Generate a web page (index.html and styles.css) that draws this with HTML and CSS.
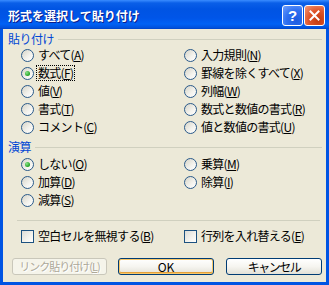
FILE: index.html
```html
<!DOCTYPE html>
<html lang="ja">
<head>
<meta charset="utf-8">
<link rel="stylesheet" href="styles.css">
</head>
<body>
<div class="window">
  <div class="titlebar">
    <span class="title">形式を選択して貼り付け</span>
    <div class="tb-buttons">
      <span class="tb-btn help">?</span>
      <span class="tb-btn close"><svg width="11" height="11" viewBox="0 0 11 11"><path d="M1.5 1.5 L9.5 9.5 M9.5 1.5 L1.5 9.5" stroke="#fff" stroke-width="2" stroke-linecap="square"/></svg></span>
    </div>
  </div>
  <div class="client">
    <div class="group-head"><span class="glabel">貼り付け</span><span class="rule"></span></div>
    <div class="options paste">
      <label class="opt"><span class="radio"></span><span class="txt">すべて(<u>A</u>)</span></label>
      <label class="opt"><span class="radio on"></span><span class="txt focus">数式(<u>F</u>)</span></label>
      <label class="opt"><span class="radio"></span><span class="txt">値(<u>V</u>)</span></label>
      <label class="opt"><span class="radio"></span><span class="txt">書式(<u>T</u>)</span></label>
      <label class="opt"><span class="radio"></span><span class="txt">コメント(<u>C</u>)</span></label>
      <label class="opt"><span class="radio"></span><span class="txt">入力規則(<u>N</u>)</span></label>
      <label class="opt"><span class="radio"></span><span class="txt">罫線を除くすべて(<u>X</u>)</span></label>
      <label class="opt"><span class="radio"></span><span class="txt">列幅(<u>W</u>)</span></label>
      <label class="opt"><span class="radio"></span><span class="txt">数式と数値の書式(<u>R</u>)</span></label>
      <label class="opt"><span class="radio"></span><span class="txt">値と数値の書式(<u>U</u>)</span></label>
    </div>
    <div class="group-head op-head"><span class="glabel">演算</span><span class="rule"></span></div>
    <div class="options ops">
      <label class="opt"><span class="radio on"></span><span class="txt">しない(<u>O</u>)</span></label>
      <label class="opt"><span class="radio"></span><span class="txt">加算(<u>D</u>)</span></label>
      <label class="opt"><span class="radio"></span><span class="txt">減算(<u>S</u>)</span></label>
      <label class="opt"><span class="radio"></span><span class="txt">乗算(<u>M</u>)</span></label>
      <label class="opt"><span class="radio"></span><span class="txt">除算(<u>I</u>)</span></label>
    </div>
    <div class="sep"></div>
    <div class="options checks">
      <label class="opt"><span class="check"></span><span class="txt">空白セルを無視する(<u>B</u>)</span></label>
      <label class="opt"><span class="check"></span><span class="txt">行列を入れ替える(<u>E</u>)</span></label>
    </div>
    <div class="buttons">
      <button class="btn disabled">リンク貼り付け(<u>L</u>)</button>
      <button class="btn default">OK</button>
      <button class="btn">キャンセル</button>
    </div>
  </div>
</div>
</body>
</html>
```

FILE: styles.css
```css
html, body {
  margin: 0;
  padding: 0;
  background: #ECE9D8;
}
body {
  font-family: "Noto Sans CJK JP", "Noto Sans", sans-serif;
  font-size: 12px;
  color: #000;
}
.window {
  width: 329px;
  height: 285px;
  box-sizing: border-box;
  display: flex;
  flex-direction: column;
  background: #0054E3;
  padding: 0 3px 3px 3px;
}
.titlebar {
  height: 29px;
  margin: 0 -3px;
  padding: 0 4px 0 8px;
  display: flex;
  align-items: center;
  justify-content: space-between;
  background: linear-gradient(to bottom, #3A8CFF 0px, #0A5FE8 3px, #0054E3 9px, #0055E8 18px, #0062F5 24px, #0050DA 28px, #0040C0 29px);
}
.title {
  color: #fff;
  font-weight: bold;
  font-size: 12px;
  text-shadow: 1px 1px 0 #0B1D8A;
  margin-top: 1px;
}
.tb-buttons {
  display: flex;
  gap: 1px;
  margin-top: 1px;
}
.tb-btn {
  width: 21px;
  height: 21px;
  box-sizing: border-box;
  border: 1px solid #fff;
  border-radius: 3px;
  display: flex;
  align-items: center;
  justify-content: center;
  color: #fff;
  font-family: "Liberation Sans", sans-serif;
  font-weight: bold;
  font-size: 15px;
}
.help {
  background: radial-gradient(circle at 70% 75%, #1C5BE0 0%, #2E6FF0 50%, #6FA0FF 100%);
}
.close {
  background: radial-gradient(circle at 70% 75%, #C23A0E 0%, #E0552A 50%, #F39A7A 100%);
}
.client {
  flex: 1;
  background: #ECE9D8;
  padding: 4px 4px 0 5px;
  display: flex;
  flex-direction: column;
}
.group-head {
  height: 12px;
  display: flex;
  align-items: center;
  line-height: 12px;
}
.glabel {
  color: #0046D5;
  margin-right: 4px;
  letter-spacing: -0.5px;
}
.rule {
  flex: 1;
  height: 1px;
  background: #D0D0BF;
  margin-top: 1px;
}
.op-head {
  margin-top: 5px;
}
.options {
  display: grid;
  grid-template-columns: 163px 1fr;
  grid-auto-flow: column;
  margin-left: 13px;
}
.paste {
  margin-top: 1px;
  grid-template-rows: repeat(5, 18px);
}
.ops {
  margin-top: 2px;
  grid-template-rows: repeat(3, 18px);
}
.checks {
  margin-top: 6px;
  grid-template-rows: 18px;
}
.opt {
  display: flex;
  align-items: center;
  white-space: nowrap;
  line-height: 14px;
}
.txt {
  margin-left: 3px;
  padding: 0 1px;
  letter-spacing: -0.7px;
}
.txt u {
  text-underline-offset: 1px;
}
.focus {
  outline: 1px dotted #000;
  outline-offset: 0;
}
.radio {
  width: 13px;
  height: 13px;
  box-sizing: border-box;
  border-radius: 50%;
  border: 1px solid #2A5A8A;
  background: linear-gradient(135deg, #D6D4C8 0%, #F4F3EE 60%, #FFFFFF 100%);
  display: flex;
  align-items: center;
  justify-content: center;
  flex: none;
}
.radio.on::after {
  content: "";
  width: 5px;
  height: 5px;
  border-radius: 50%;
  background: radial-gradient(circle at 35% 35%, #8BE38B, #21A121 70%);
}
.check {
  width: 13px;
  height: 13px;
  box-sizing: border-box;
  border: 1px solid #1C5180;
  background: linear-gradient(135deg, #DCDCD7 0%, #F4F3EE 60%, #FFFFFF 100%);
  flex: none;
}
.sep {
  height: 1px;
  background: #D0D0BF;
  margin: 11px 2px 0 9px;
}
.buttons {
  display: flex;
  gap: 11px;
  margin-top: 13px;
  padding-left: 4px;
}
.btn {
  width: 96px;
  height: 17px;
  box-sizing: border-box;
  border: 1px solid #003C74;
  border-radius: 3px;
  background: linear-gradient(to bottom, #FFFFFF 0%, #F6F5F0 50%, #E3E1D7 100%);
  font-family: "Noto Sans CJK JP", "Noto Sans", sans-serif;
  font-size: 12px;
  line-height: 13px;
  padding: 0;
  color: #000;
  white-space: nowrap;
  letter-spacing: -1.5px;
}
.btn.disabled {
  width: 95px;
  border-color: #C9C7BA;
  background: #F5F4EA;
  color: #ACA899;
  font-size: 11px;
  letter-spacing: -1px;
  text-shadow: 1px 1px 0 #FFFFFF;
}
.btn.default {
  letter-spacing: 0;
  box-shadow: inset 0 0 0 1px #F8C86A, inset 0 -1px 0 1px #E5A03A;
  margin-right: 1px;
}
```
